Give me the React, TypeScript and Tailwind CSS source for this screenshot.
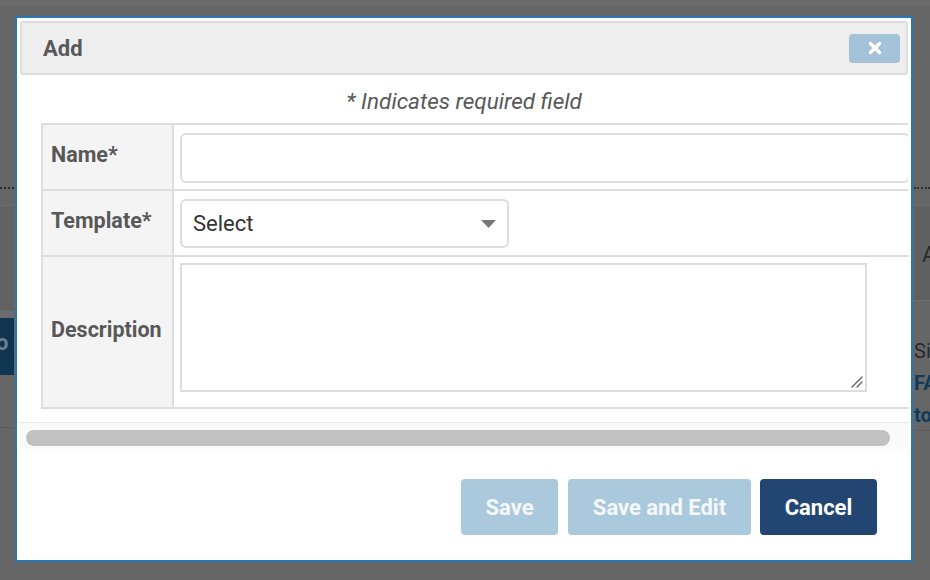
import React from 'react';

const font = { fontFamily: 'Roboto, "Noto Sans", Arial, sans-serif' };

// --- page behind the modal (seen through the dimmed overlay) ---
const Backdrop: React.FC = () => (
  <div className="absolute inset-0 bg-[#666666]">
    <div className="h-[6px] bg-[#6a6a6a]" />
    {/* left sliver */}
    <div className="absolute left-0 top-[187px] w-[14px] border-t-2 border-dotted border-[#2e2e2e]" />
    <div className="absolute left-0 top-[205px] w-[14px] h-[105px] bg-[#626262] border-t border-[#6e6e6e]" />
    <div className="absolute left-0 top-[310px] w-[14px] h-[8px] bg-[#6b6b6b]" />
    <div className="absolute left-0 top-[318px] w-[14px] h-[57px] bg-[#0f3550] overflow-hidden">
      <span className="absolute -left-[4px] top-[14px] text-[22px] font-bold text-[#6b7f8e] leading-none">o</span>
    </div>
    <div className="absolute left-0 top-[427px] w-[14px] border-t border-[#5c5c5c]" />
    {/* right sliver */}
    <div className="absolute left-[914px] top-[187px] w-[16px] border-t-2 border-dotted border-[#2e2e2e]" />
    <div className="absolute left-[914px] top-[205px] w-[16px] h-[95px] bg-[#606060] border-t border-[#6e6e6e] overflow-hidden">
      <span className="absolute left-[8px] top-[38px] text-[22px] text-[#2a2a2a] leading-none">A</span>
    </div>
    <div className="absolute left-[914px] top-[300px] w-[16px] h-[130px] bg-[#666666] border-t border-[#6e6e6e] overflow-hidden">
      <div className="absolute left-0 top-[34px] text-[20px] leading-[32px] text-[#2a2a2a]">
        <div>Si</div>
        <div className="font-bold text-[#0e3a5c]">FA</div>
        <div className="font-bold text-[#0e3a5c]">to</div>
      </div>
    </div>
    <div className="absolute left-[914px] top-[430px] w-[16px] border-t border-[#5c5c5c]" />
  </div>
);

const Label: React.FC<{ children: React.ReactNode }> = ({ children }) => (
  <div className="bg-[#f4f4f4] flex items-center pl-[8px] pb-[4px] text-[21.5px] font-bold text-[#585858]">
    {children}
  </div>
);

export default function App() {
  return (
    <div className="relative w-[930px] h-[580px] overflow-hidden" style={font}>
      <Backdrop />

      {/* --- MODAL --- */}
      <div className="absolute left-[15px] top-[16px] w-[898px] h-[546px] bg-white border-2 border-[#2a78b2] flex flex-col p-[3px]">
        {/* header */}
        <div className="h-[54px] shrink-0 bg-[#eeeeee] border-2 border-[#dcdcdc] rounded-[3px] flex items-center justify-between pl-[21px] pr-[6px]">
          <span className="text-[22px] font-bold text-[#585858]">Add</span>
          <button className="w-[51px] h-[29px] rounded-[4px] bg-[#a5c3d8] flex items-center justify-center">
            <svg width="14" height="14" viewBox="0 0 14 14">
              <path d="M2.5 2.5 L11.5 11.5 M11.5 2.5 L2.5 11.5" stroke="white" strokeWidth="3.4" strokeLinecap="round" />
            </svg>
          </button>
        </div>

        {/* body (horizontally scrolled, clipped) */}
        <div className="overflow-hidden">
          <div className="pt-[14px] text-center text-[22.5px] italic text-[#585858] leading-[25px]">
            * Indicates required field
          </div>
          <div className="mt-[9px] ml-[21px] w-[877px] p-[2px] bg-[#dddddd] grid grid-cols-[129px_742px] grid-rows-[64px_64px_150px] gap-[2px]">
            <Label>Name*</Label>
            <div className="bg-white pt-[8px] pl-[6px]">
              <div className="w-[730px] h-[50px] border-2 border-[#dddddd] rounded-[6px]" />
            </div>

            <Label>Template*</Label>
            <div className="bg-white pt-[8px] pl-[6px]">
              <div className="w-[329px] h-[49px] border-2 border-[#dddddd] rounded-[6px] flex items-center justify-between pl-[11px] pr-[11px]">
                <span className="text-[22px] text-[#333333]">Select</span>
                <svg width="15" height="8" viewBox="0 0 15 8">
                  <path d="M0 0 H15 L7.5 8 Z" fill="#777777" />
                </svg>
              </div>
            </div>

            <Label>Description</Label>
            <div className="bg-white pt-[6px] pl-[6px]">
              <div className="relative w-[687px] h-[129px] border-2 border-[#dddddd]">
                <svg className="absolute right-[2px] bottom-[2px]" width="13" height="13" viewBox="0 0 13 13">
                  <path d="M12 2 L2 12 M12 7 L7 12" stroke="#666666" strokeWidth="1.4" strokeLinecap="round" />
                </svg>
              </div>
            </div>
          </div>
        </div>

        {/* horizontal scrollbar */}
        <div className="mt-[13px] h-[27px] border-t border-[#e6e6e6] bg-[#fafafa] pt-[7px] pl-[6px] pr-[18px]">
          <div className="h-[16px] rounded-full bg-[#c1c1c1]" />
        </div>

        {/* footer */}
        <div className="flex justify-end pt-[30px] pr-[31px]">
          <button className="h-[56px] w-[97px] rounded-[4px] bg-[#abc9dd] text-[22px] font-bold text-[#f4f8fb]">Save</button>
          <button className="ml-[10px] h-[56px] w-[183px] rounded-[4px] bg-[#abc9dd] text-[22px] font-bold text-[#f4f8fb]">Save and Edit</button>
          <button className="ml-[9px] h-[56px] w-[117px] rounded-[4px] bg-[#224671] text-[22px] font-bold text-white">Cancel</button>
        </div>
      </div>
    </div>
  );
}
